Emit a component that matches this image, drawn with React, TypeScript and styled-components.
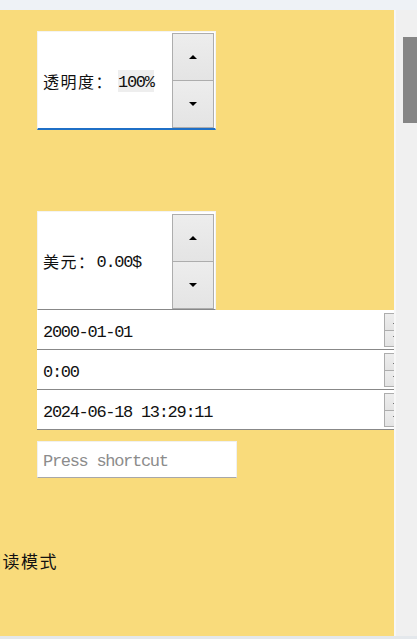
import React from 'react';
import styled, { createGlobalStyle } from 'styled-components';

const GlobalStyle = createGlobalStyle`
  html, body {
    margin: 0;
    padding: 0;
    background: #eef2f6;
    overflow: hidden;
  }
`;

const cjk = `"Noto Sans CJK SC", sans-serif`;
const mono = `"Liberation Mono", "Noto Sans CJK SC", monospace`;

const Window = styled.div`
  width: 417px;
  height: 639px;
  padding-top: 10px;
  box-sizing: border-box;
  display: flex;
  flex-direction: column;
`;

const Body = styled.div`
  display: flex;
  height: 626px;
`;

const Panel = styled.div`
  width: 398px;
  height: 100%;
  background: #f9db7b;
  overflow: hidden;
  padding: 21px 0 0 37px;
  box-sizing: border-box;
  display: flex;
  flex-direction: column;
  border-right: 2px solid #f7f7f7;
`;

const ScrollTrack = styled.div`
  flex: 1;
  background: #f0f0f0;
  padding: 27px 0 0 7px;
`;

const ScrollThumb = styled.div`
  width: 14px;
  height: 86px;
  background: #858585;
`;

const SpinBox = styled.div<{ $focused?: boolean; $mt?: number }>`
  width: 179px;
  height: 99px;
  margin-top: ${(p) => p.$mt ?? 0}px;
  box-sizing: border-box;
  background: #fff;
  border: 1px solid #f3f3f3;
  border-bottom: ${(p) => (p.$focused ? '2px solid #1f6fc6' : '1px solid #888')};
  display: flex;
  align-items: center;
  padding: 1px 1px 0 5px;
`;

const Label = styled.span`
  font-family: ${cjk};
  font-size: 16px;
  letter-spacing: 1.5px;
  color: #111;
`;

const Value = styled.span<{ $selected?: boolean }>`
  font-family: ${mono};
  font-size: 17px;
  letter-spacing: -1.3px;
  color: #111;
  padding-top: 3px;
  background: ${(p) => (p.$selected ? '#eeeeee' : 'transparent')};
  margin-left: ${(p) => (p.$selected ? 5 : 1)}px;
`;

const Content = styled.div`
  flex: 1;
  display: flex;
  align-items: center;
`;

const Buttons = styled.div<{ $w: number; $h: number }>`
  width: ${(p) => p.$w}px;
  height: ${(p) => p.$h}px;
  display: flex;
  flex-direction: column;
  align-self: center;
  flex-shrink: 0;
`;

const StepButton = styled.div`
  flex: 1;
  background: linear-gradient(#ededed, #e4e4e4);
  border: 1px solid #adadad;
  display: flex;
  align-items: center;
  justify-content: center;
  & + & {
    border-top: none;
  }
`;

const Arrow = styled.span<{ $down?: boolean }>`
  width: 0;
  height: 0;
  border-left: 4px solid transparent;
  border-right: 4px solid transparent;
  ${(p) => (p.$down ? 'border-top: 4px solid #000;' : 'border-bottom: 4px solid #000;')}
`;

const Steppers = ({ w, h }: { w: number; h: number }) => (
  <Buttons $w={w} $h={h}>
    <StepButton>
      <Arrow />
    </StepButton>
    <StepButton>
      <Arrow $down />
    </StepButton>
  </Buttons>
);

const DateRow = styled.div`
  width: 372px;
  height: 40px;
  box-sizing: border-box;
  background: #fff;
  border-bottom: 1px solid #888;
  display: flex;
  align-items: center;
  padding-left: 6px;
  padding-top: 1px;
  flex-shrink: 0;
`;

const DateText = styled.span`
  flex: 1;
  font-family: ${mono};
  font-size: 17px;
  letter-spacing: -1.3px;
  color: #111;
  padding-top: 5px;
`;

const ShortcutInput = styled.input`
  width: 200px;
  height: 37px;
  margin-top: 11px;
  box-sizing: border-box;
  border: 1px solid #f0f0f0;
  border-bottom: 1px solid #a8a8a8;
  background: #fff;
  padding: 4px 0 0 5px;
  outline: none;
  font-family: ${mono};
  font-size: 17px;
  letter-spacing: -1.3px;
  color: #111;
  flex-shrink: 0;
  &::placeholder {
    color: #8c8c8c;
  }
`;

const ModeLabel = styled.div`
  margin: 70px 0 0 -53px;
  font-family: ${cjk};
  font-size: 17px;
  letter-spacing: 1.5px;
  color: #111;
  white-space: nowrap;
`;

const BottomStrip = styled.div`
  flex: 1;
  background: #e4e8ec;
`;

export default function App() {
  return (
    <Window>
      <GlobalStyle />
      <Body>
        <Panel>
          <SpinBox $focused>
            <Content>
              <Label>透明度：</Label>
              <Value $selected>100%</Value>
            </Content>
            <Steppers w={42} h={95} />
          </SpinBox>
          <SpinBox $mt={81}>
            <Content>
              <Label>美元：</Label>
              <Value>0.00$</Value>
            </Content>
            <Steppers w={42} h={95} />
          </SpinBox>
          <DateRow>
            <DateText>2000-01-01</DateText>
            <Steppers w={25} h={34} />
          </DateRow>
          <DateRow>
            <DateText>0:00</DateText>
            <Steppers w={25} h={34} />
          </DateRow>
          <DateRow>
            <DateText>2024-06-18 13:29:11</DateText>
            <Steppers w={25} h={34} />
          </DateRow>
          <ShortcutInput placeholder="Press shortcut" readOnly />
          <ModeLabel>阅读模式</ModeLabel>
        </Panel>
        <ScrollTrack>
          <ScrollThumb />
        </ScrollTrack>
      </Body>
      <BottomStrip />
    </Window>
  );
}
